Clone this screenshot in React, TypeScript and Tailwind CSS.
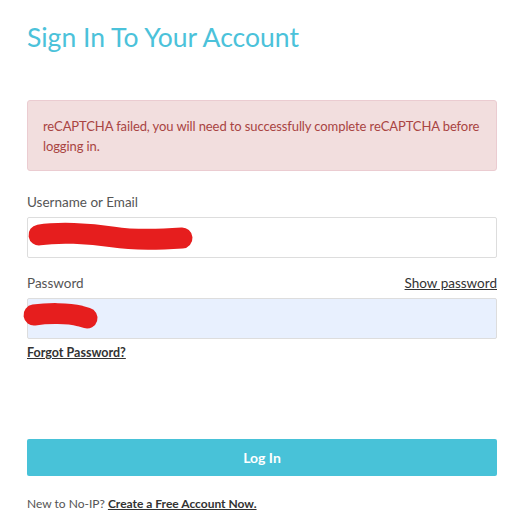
import React from 'react';

const Scribble: React.FC<{ d: string; className?: string }> = ({ d, className }) => (
    <svg className={className} width="100%" height="100%" overflow="visible" fill="none">
        <path d={d} stroke="#e61e1e" strokeWidth={21} strokeLinecap="round" strokeLinejoin="round" />
    </svg>
);

const App: React.FC = () => {
    return (
        <div className="w-[526px] h-[525px] bg-white font-['Lato',sans-serif] text-[#555]">
            <div className="w-[470px] ml-[27px] pt-[20px]">
                <h1 className="text-[26.5px] leading-[34px] text-[#4bc2da] font-normal">Sign In To Your Account</h1>

                <div className="mt-[46px] rounded-[3px] border border-[#ebccd1] bg-[#f2dede] px-[15px] pt-[15px] pb-[14px] text-[13px] leading-[20px] tracking-[-0.1px] text-[#a94442]">
                    reCAPTCHA failed, you will need to successfully complete reCAPTCHA before logging in.
                </div>

                <label className="mt-[22px] block text-[13.5px] leading-[18px] text-[#555]">Username or Email</label>
                <div className="relative mt-[6px] h-[41px] rounded-[2px] border border-[#ddd] bg-white">
                    <Scribble className="absolute inset-0" d="M11 17 C 30 14, 60 15, 85 19 S 140 21, 154 20" />
                </div>

                <div className="mt-[16px] flex items-end justify-between text-[13.5px] leading-[18px]">
                    <span className="text-[#555]">Password</span>
                    <a className="text-[#333] underline" href="#">Show password</a>
                </div>
                <div className="relative mt-[6px] h-[41px] rounded-[2px] border border-[#ddd] bg-[#e8f0fe]">
                    <Scribble className="absolute inset-0" d="M6 16 C 20 14, 40 14, 52 17 L 59 19" />
                </div>
                <a href="#" className="mt-[6px] block w-fit text-[12.5px] font-bold leading-[16px] text-[#333] underline">Forgot Password?</a>

                <button className="mt-[78px] h-[37px] w-full rounded-[2px] bg-[#48c2d8] text-[14px] font-bold text-white">Log In</button>

                <p className="mt-[20px] text-[12px] leading-[16px] text-[#555]">
                    New to No-IP? <a href="#" className="font-bold text-[#333] underline">Create a Free Account Now.</a>
                </p>
            </div>
        </div>
    );
};

export default App;
